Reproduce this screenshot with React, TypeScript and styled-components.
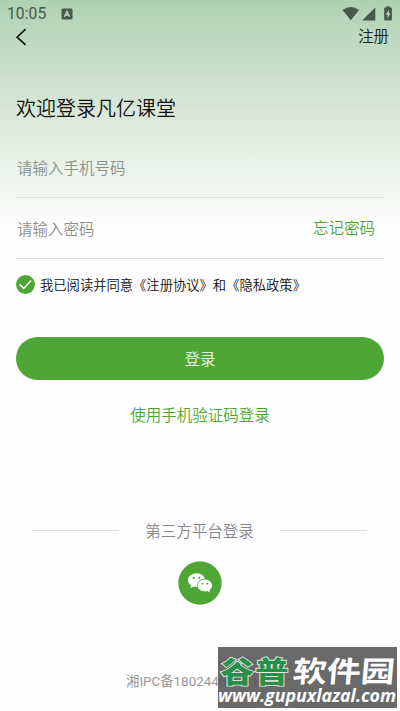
import React from "react";
import styled, { createGlobalStyle } from "styled-components";

const GREEN = "#4ea735";

const GlobalStyle = createGlobalStyle`
  * { box-sizing: border-box; }
  body { margin: 0; background: #fefefe; }
  button, input { font: inherit; }
`;

const Screen = styled.main`
  position: relative;
  display: flex;
  flex-direction: column;
  width: 400px;
  height: 711px;
  overflow: hidden;
  background: linear-gradient(180deg, #b0d1b1 0px, #dfebdf 130px, #fefefe 227px);
  font-family: Roboto, "Noto Sans CJK SC", sans-serif;
  font-weight: 350;
  color: #111;
`;

const StatusBar = styled.header`
  display: flex;
  align-items: center;
  height: 27px;
  padding: 0 7px;
  color: #48584a;
`;

const Clock = styled.span`
  width: 54px;
  font-size: 15.6px;
  font-weight: 400;
  line-height: 27px;
  letter-spacing: 0.1px;
  padding-top: 2px;
`;

const StatusIcons = styled.svg`
  margin-left: auto;
  margin-right: -1px;
`;

const NavBar = styled.nav`
  display: flex;
  justify-content: space-between;
  align-items: center;
  height: 20px;
  padding: 0 11px 0 15px;
`;

const PlainButton = styled.button<{ $size?: number; $color?: string }>`
  display: flex;
  align-items: center;
  padding: 0;
  border: 0;
  background: none;
  white-space: nowrap;
  line-height: 20px;
  font-size: ${(p) => p.$size ?? 15.4}px;
  color: ${(p) => p.$color ?? "#222"};
`;

const Title = styled.h1`
  margin: 47px 16px 0;
  height: 30px;
  line-height: 30px;
  font-size: 20px;
  font-weight: 350;
  color: #111;
`;

const Field = styled.div<{ $height: number }>`
  display: flex;
  align-items: center;
  height: ${(p) => p.$height}px;
  margin: 0 16px;
  padding: 2px 9px 0 0;
  border-bottom: 1px solid #dde1de;
`;

const PhoneField = styled(Field)`
  margin-top: 13px;
`;

const Input = styled.input`
  flex: 1;
  min-width: 0;
  padding: 1px 0 0 1px;
  border: 0;
  outline: 0;
  background: transparent;
  font-size: 15.5px;
  &::placeholder { color: #8d918e; opacity: 1; }
`;

const Agreement = styled.label`
  display: flex;
  align-items: center;
  gap: 5px;
  height: 20px;
  margin: 15px 16px 0;
  font-size: 13.3px;
  white-space: nowrap;
`;

const LoginButton = styled.button`
  height: 43px;
  margin: 43px 16px 0;
  padding: 0 0 2px;
  border: 0;
  border-radius: 22px;
  background: ${GREEN};
  color: #ebf5e8;
  font-size: 15.5px;
`;

const CodeLogin = styled.div`
  display: flex;
  justify-content: center;
  margin-top: 26px;
`;

const Divider = styled.div`
  display: flex;
  align-items: center;
  gap: 26px;
  height: 24px;
  margin: 92px 33px 0 32px;
  color: #888;
  font-size: 15.5px;
  white-space: nowrap;
  &::before, &::after { content: ""; flex: 1; height: 1px; background: #dedede; }
`;

const WechatButton = styled.button`
  align-self: center;
  width: 44px;
  height: 44px;
  margin-top: 19px;
  padding: 0;
  border: 0;
  background: none;
  svg { display: block; }
`;

const License = styled.footer`
  margin: 67px 0 0 126px;
  font-size: 13.4px;
  font-weight: 400;
  line-height: 20px;
  color: #999;
  white-space: nowrap;
`;

const Watermark = styled.aside`
  position: absolute;
  left: 218px;
  top: 647px;
  width: 179px;
  height: 61px;
  overflow: hidden;
  background: rgba(84, 84, 84, 0.88);
  svg { display: block; }
`;

export default function App() {
  return (
    <>
      <GlobalStyle />
      <Screen>
        <StatusBar>
          <Clock>10:05</Clock>
          <svg width="12" height="12" viewBox="0 0 12 12">
            <rect x="0.5" y="0.5" width="11" height="11" rx="1.4" fill="currentColor" />
            <path d="M3.4 8.7 6 3.2l2.6 5.5M4.5 7h3" fill="none" stroke="#c4dac4" strokeWidth="1.3" />
          </svg>
          <StatusIcons width="52" height="16" viewBox="0 0 52 16" fill="currentColor">
            <path d="M.6 4Q8.8-2.2 17 4L8.8 14.3Z" />
            <path d="M33.3 1.5V14.5H20.2Z" />
            <path d="M43.2 1.5h1.1V.2h3.5v1.3h1.1q1 0 1 1v11q0 1-1 1h-5.7q-1 0-1-1v-11q0-1 1-1Z" />
            <path d="M46.8 3.6 43.9 8.6h1.7v3.8l2.8-5.2h-1.6Z" fill="#bad7ba" />
          </StatusIcons>
        </StatusBar>
        <NavBar>
          <PlainButton aria-label="返回">
            <svg width="12" height="18" viewBox="0 0 12 18" fill="none" stroke="#151c15" strokeWidth="1.7">
              <path d="M10.6 1.2 2.1 9.2l8.5 7.7" />
            </svg>
          </PlainButton>
          <PlainButton>注册</PlainButton>
        </NavBar>
        <Title>欢迎登录凡亿课堂</Title>
        <PhoneField $height={61}>
          <Input type="tel" placeholder="请输入手机号码" />
        </PhoneField>
        <Field $height={61}>
          <Input type="password" placeholder="请输入密码" />
          <PlainButton $size={15.5} $color={GREEN}>忘记密码</PlainButton>
        </Field>
        <Agreement>
          <svg width="19" height="19" viewBox="0 0 19 19">
            <circle cx="9.5" cy="9.5" r="9.4" fill={GREEN} />
            <path d="m3.7 9.4 4 4 7.5-8" fill="none" stroke="#fff" strokeWidth="1.5" />
          </svg>
          我已阅读并同意《注册协议》和《隐私政策》
        </Agreement>
        <LoginButton>登录</LoginButton>
        <CodeLogin>
          <PlainButton $size={15.5} $color={GREEN}>使用手机验证码登录</PlainButton>
        </CodeLogin>
        <Divider>第三方平台登录</Divider>
        <WechatButton aria-label="微信登录">
          <svg width="44" height="44" viewBox="0 0 44 44">
            <circle cx="22" cy="22" r="21.7" fill={GREEN} />
            <path d="M18.5 12.2c-4.8 0-8.5 3-8.5 6.9 0 2.3 1.2 4.1 3.2 5.4l-.8 2.6 3.2-1.5c1.3.4 2.5.5 3.8.4-1.3-4.4 2.4-8.4 7.4-8.3-.7-3.2-4.2-5.5-8.3-5.5Z" fill="#fff" />
            <path d="M26.8 18.5c4 0 7.3 2.7 7.3 6 0 1.9-1.1 3.6-2.7 4.8l.6 2.1-2.5-1.3c-5.3 1.3-9.9-1.6-9.9-5.6 0-3.3 3.2-6 7.2-6Z" fill="#fff" />
            <g fill={GREEN}>
              <circle cx="15.7" cy="16.9" r="1.05" />
              <circle cx="21.3" cy="16.9" r="1.05" />
              <circle cx="24.5" cy="22.7" r=".9" />
              <circle cx="29.2" cy="22.7" r=".9" />
            </g>
          </svg>
        </WechatButton>
        <License>湘IPC备18024466号-10A</License>
        <Watermark>
          <svg width="179" height="61" viewBox="0 0 179 61">
            <g fontFamily="'Noto Sans CJK SC', sans-serif" fontWeight="700">
              <text transform="translate(2.5 35.5) scale(1.16 1)" fontSize="29" fontWeight="900" letterSpacing="0.8" fill="#27904a" stroke="#e5f1e8" strokeWidth="1.6" paintOrder="stroke">谷普</text>
              <text transform="translate(74 35) skewX(-5)" fontSize="29" textLength="102" lengthAdjust="spacingAndGlyphs" fill="#fff">软件园</text>
            </g>
            <text x="0" y="55" fontFamily="'Open Sans', sans-serif" fontWeight="700" fontStyle="italic" fontSize="18" textLength="178" lengthAdjust="spacingAndGlyphs" fill="#fff">www.gupuxlazal.com</text>
          </svg>
        </Watermark>
      </Screen>
    </>
  );
}
